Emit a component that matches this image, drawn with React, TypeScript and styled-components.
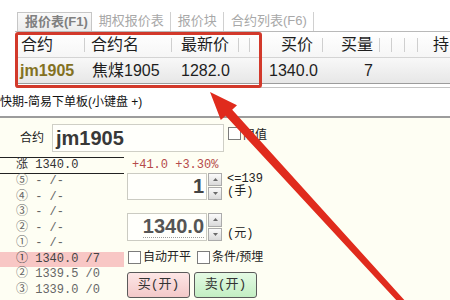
import React from 'react';
import styled, { createGlobalStyle } from 'styled-components';

const SANS = `"Liberation Sans", "Noto Sans CJK SC", sans-serif`;
const MONO = `"Liberation Mono", "Noto Sans CJK SC", monospace`;

const Global = createGlobalStyle`
  html, body { margin: 0; padding: 0; background: #ffffff; }
  body { width: 450px; height: 300px; overflow: hidden; font-family: ${SANS}; }
  * { box-sizing: border-box; }
`;

const Page = styled.div`
  position: relative;
  width: 450px;
  height: 300px;
  overflow: hidden;
  display: flex;
  flex-direction: column;
  padding-top: 12px;
`;

const TabBar = styled.div`
  display: flex;
  margin-left: 15px;
  height: 20px;
  border-bottom: 1px solid #b9b9b9;
`;

const Tab = styled.div<{ $active?: boolean }>`
  height: 19px;
  line-height: 18px;
  font-size: 13px;
  padding: 0 6px 0 7px;
  color: ${(p) => (p.$active ? '#808080' : '#a8a8a8')};
  font-weight: ${(p) => (p.$active ? 700 : 400)};
  border-right: 1px solid #d0d0d0;
  ${(p) =>
    p.$active
      ? `margin-left: 2px; padding: 0 3px 0 7px; background: linear-gradient(#fafafa, #ececec); border: 1px solid #c6c6c6; border-bottom: none;`
      : ''}
`;

const TableWrap = styled.div`
  position: relative;
  margin-left: 16px;
`;

const COLS = '69px 87px 67px 11px 73px 57px 12px 13px 13px 1fr';

const HeaderRow = styled.div`
  display: grid;
  grid-template-columns: ${COLS};
  height: 26px;
  background: linear-gradient(#ffffff, #f6f6f6);
  border-bottom: 1px solid #d4d4d4;
`;

const DataRow = styled.div`
  display: grid;
  grid-template-columns: ${COLS};
  height: 26px;
  background: linear-gradient(#f8f8f8, #e7e7e7);
  border-bottom: 1px solid #9c9c9c;
`;

const HeadCell = styled.div<{ $pad: number; $right?: boolean }>`
  position: relative;
  font-size: 16px;
  line-height: 25px;
  color: #1e1e1e;
  white-space: nowrap;
  text-align: ${(p) => (p.$right ? 'right' : 'left')};
  padding: ${(p) => (p.$right ? `0 ${p.$pad}px 0 0` : `0 0 0 ${p.$pad}px`)};
  &::after {
    content: '';
    position: absolute;
    right: 0;
    top: 6px;
    bottom: 5px;
    width: 1px;
    background: #cfcfcf;
  }
  &:last-child::after { display: none; }
`;

const DataCell = styled.div<{ $pad: number; $right?: boolean; $code?: boolean }>`
  font-size: 16px;
  line-height: 25px;
  white-space: nowrap;
  color: ${(p) => (p.$code ? '#837122' : '#1e1e1e')};
  font-weight: ${(p) => (p.$code ? 700 : 400)};
  text-align: ${(p) => (p.$right ? 'right' : 'left')};
  padding: ${(p) => (p.$right ? `0 ${p.$pad}px 0 0` : `0 0 0 ${p.$pad}px`)};
`;

const BottomLine = styled.div`
  margin-top: 3px;
  height: 1px;
  background: #c4c4c4;
`;

const Highlight = styled.div`
  position: absolute;
  left: -1px;
  top: 0;
  width: 247px;
  height: 56px;
  border: 3px solid #d2392b;
  border-radius: 3px;
  pointer-events: none;
`;

const Subtitle = styled.div`
  margin-top: 7px;
  margin-left: 0;
  height: 15px;
  line-height: 15px;
  font-size: 12px;
  color: #111;
  white-space: nowrap;
`;

const Panel = styled.div`
  flex: 1;
  margin-top: 6px;
  border-top: 2px solid #9c9c9c;
  background: #fefef3;
  display: flex;
  flex-direction: column;
`;

const ContractRow = styled.div`
  display: flex;
  align-items: flex-start;
  height: 39px;
  padding-top: 6px;
`;

const FieldLabel = styled.div`
  margin: 8px 0 0 20px;
  font-size: 12px;
  line-height: 12px;
  color: #222;
`;

const ContractInput = styled.div`
  margin-left: 8px;
  width: 172px;
  height: 28px;
  border: 1px solid #cfcfc6;
  background: #fffffb;
  padding-left: 3px;
  font-size: 20px;
  font-weight: 700;
  line-height: 26px;
  color: #383838;
`;

const CheckBox = styled.span<{ $gap?: number }>`
  display: inline-block;
  flex: none;
  width: 13px;
  height: 13px;
  margin-left: ${(p) => p.$gap ?? 0}px;
  border: 1px solid #7c7c7c;
  background: #ffffff;
`;

const LimitCheck = styled.div`
  display: flex;
  align-items: center;
  margin: 1px 0 0 4px;
  font-size: 12px;
  color: #222;
  gap: 2px;
`;

const Body = styled.div`
  display: grid;
  grid-template-columns: 124px 1fr;
`;

const DepthList = styled.div`
  border-top: 1px solid #222;
  display: flex;
  flex-direction: column;
`;

const RiseRow = styled.div`
  height: 16px;
  line-height: 15px;
  padding-left: 16px;
  font-family: ${MONO};
  font-size: 12px;
  color: #333;
  border-bottom: 1px solid #222;
  white-space: pre;
`;

const DepthRow = styled.div<{ $hl?: boolean }>`
  height: 15.5px;
  line-height: 15.5px;
  padding-left: 16px;
  font-family: ${MONO};
  font-size: 12px;
  color: ${(p) => (p.$hl ? '#444' : '#666')};
  background: ${(p) => (p.$hl ? '#f8c7c5' : 'transparent')};
  white-space: pre;
`;

const Controls = styled.div`
  padding-left: 3px;
  display: flex;
  flex-direction: column;
`;

const Change = styled.div`
  margin-top: 1px;
  height: 14px;
  line-height: 14px;
  padding-left: 5px;
  font-family: ${MONO};
  font-size: 12px;
  color: #b54a4a;
  white-space: pre;
`;

const SpinRow = styled.div<{ $top: number; $h: number }>`
  display: flex;
  margin-top: ${(p) => p.$top}px;
  height: ${(p) => p.$h}px;
`;

const SpinInput = styled.div<{ $tone: string }>`
  width: 80px;
  height: 100%;
  border: 1px solid #cbcbc2;
  background: #fffffb;
  text-align: right;
  padding-right: 2px;
  font-size: 20px;
  font-weight: 700;
  line-height: 25px;
  color: ${(p) => p.$tone};
`;

const Dotted = styled.span`
  border-bottom: 1px dotted #9a9a9a;
`;

const SpinButtons = styled.div`
  margin-left: 1px;
  width: 14px;
  display: flex;
  flex-direction: column;
  gap: 1px;
`;

const SpinBtn = styled.div`
  flex: 1;
  border: 1px solid #ababab;
  background: linear-gradient(#fbfbfb, #dadada);
  display: flex;
  align-items: center;
  justify-content: center;
`;

const SpinLabel = styled.div<{ $end?: boolean }>`
  margin-left: 5px;
  display: flex;
  flex-direction: column;
  justify-content: ${(p) => (p.$end ? 'flex-end' : 'flex-start')};
  font-family: ${MONO};
  font-size: 12px;
  line-height: 13px;
  color: #222;
  white-space: pre;
`;

const CheckRow = styled.div`
  margin-top: 10px;
  height: 13px;
  display: flex;
  align-items: center;
  padding-left: 1px;
`;

const CheckText = styled.span`
  margin-left: 2px;
  font-size: 12px;
  line-height: 13px;
  color: #222;
  white-space: nowrap;
`;

const ButtonRow = styled.div`
  margin-top: 8px;
  display: flex;
  gap: 4px;
`;

const OrderButton = styled.div<{ $side: 'buy' | 'sell' }>`
  width: 63px;
  height: 26px;
  border: 1px solid #5a5a5a;
  border-radius: 3px;
  background: ${(p) =>
    p.$side === 'buy'
      ? 'linear-gradient(#fde6e6, #f3c9c9)'
      : 'linear-gradient(#e4fae4, #c3eec3)'};
  font-family: ${MONO};
  font-size: 13px;
  line-height: 24px;
  text-align: center;
  color: #333;
`;

const ArrowLayer = styled.svg`
  position: absolute;
  left: 0;
  top: 0;
  width: 450px;
  height: 300px;
  pointer-events: none;
`;

const Tri = ({ up }: { up?: boolean }) => (
  <svg width="5" height="3" viewBox="0 0 5 3">
    <path d={up ? 'M0 3 L2.5 0 L5 3 Z' : 'M0 0 L5 0 L2.5 3 Z'} fill="#6a6a6a" />
  </svg>
);

const columns = [
  { head: '合约', hp: 5, data: 'jm1905', dp: 4, code: true },
  { head: '合约名', hp: 6, data: '焦煤1905', dp: 7 },
  { head: '最新价', hp: 9, data: '1282.0', dp: 9 },
  { head: '', hp: 0, data: '', dp: 0 },
  { head: '买价', hp: 10, data: '1340.0', dp: 5, right: true },
  { head: '买量', hp: 7, data: '7', dp: 7, right: true },
  { head: '', hp: 0, data: '', dp: 0 },
  { head: '', hp: 0, data: '', dp: 0 },
  { head: '', hp: 0, data: '', dp: 0 },
  { head: '持', hp: 15, data: '', dp: 0 },
];

const tabs = ['报价表(F1)', '期权报价表', '报价块', '合约列表(F6)'];

const depth = [
  { t: '⑤ - /-' },
  { t: '④ - /-' },
  { t: '③ - /-' },
  { t: '② - /-' },
  { t: '① - /-' },
  { t: '① 1340.0 /7', hl: true },
  { t: '② 1339.5 /0' },
  { t: '③ 1339.0 /0' },
];

export default function App() {
  return (
    <>
      <Global />
      <Page>
        <TabBar>
          {tabs.map((t, i) => (
            <Tab key={t} $active={i === 0}>
              {t}
            </Tab>
          ))}
        </TabBar>
        <TableWrap>
          <HeaderRow>
            {columns.map((c, i) => (
              <HeadCell key={i} $pad={c.hp} $right={c.right}>
                {c.head}
              </HeadCell>
            ))}
          </HeaderRow>
          <DataRow>
            {columns.map((c, i) => (
              <DataCell key={i} $pad={c.dp} $right={c.right} $code={c.code}>
                {c.data}
              </DataCell>
            ))}
          </DataRow>
          <BottomLine />
          <Highlight />
        </TableWrap>
        <Subtitle>快期-简易下单板(小键盘 +)</Subtitle>
        <Panel>
          <ContractRow>
            <FieldLabel>合约</FieldLabel>
            <ContractInput>jm1905</ContractInput>
            <LimitCheck>
              <CheckBox />
              <span>限值</span>
            </LimitCheck>
          </ContractRow>
          <Body>
            <DepthList>
              <RiseRow>涨 1340.0</RiseRow>
              {depth.map((d, i) => (
                <DepthRow key={i} $hl={d.hl}>
                  {d.t}
                </DepthRow>
              ))}
            </DepthList>
            <Controls>
              <Change>+41.0 +3.30%</Change>
              <SpinRow $top={1} $h={27}>
                <SpinInput $tone="#444">1</SpinInput>
                <SpinButtons>
                  <SpinBtn>
                    <Tri up />
                  </SpinBtn>
                  <SpinBtn>
                    <Tri />
                  </SpinBtn>
                </SpinButtons>
                <SpinLabel>
                  <span>{'<=139'}</span>
                  <span>(手)</span>
                </SpinLabel>
              </SpinRow>
              <SpinRow $top={13} $h={28}>
                <SpinInput $tone="#555">
                  <Dotted>1340.0</Dotted>
                </SpinInput>
                <SpinButtons>
                  <SpinBtn>
                    <Tri up />
                  </SpinBtn>
                  <SpinBtn>
                    <Tri />
                  </SpinBtn>
                </SpinButtons>
                <SpinLabel $end>
                  <span>(元)</span>
                </SpinLabel>
              </SpinRow>
              <CheckRow>
                <CheckBox />
                <CheckText>自动开平</CheckText>
                <CheckBox $gap={6} />
                <CheckText>条件/预埋</CheckText>
              </CheckRow>
              <ButtonRow>
                <OrderButton $side="buy">买(开)</OrderButton>
                <OrderButton $side="sell">卖(开)</OrderButton>
              </ButtonRow>
            </Controls>
          </Body>
        </Panel>
        <ArrowLayer viewBox="0 0 450 300">
          <polygon
            points="210,92 237,105.3 232.2,109.7 405.2,301 400.8,305 225.6,115.7 220.8,120.1"
            fill="#e02b1d"
          />
        </ArrowLayer>
      </Page>
    </>
  );
}
